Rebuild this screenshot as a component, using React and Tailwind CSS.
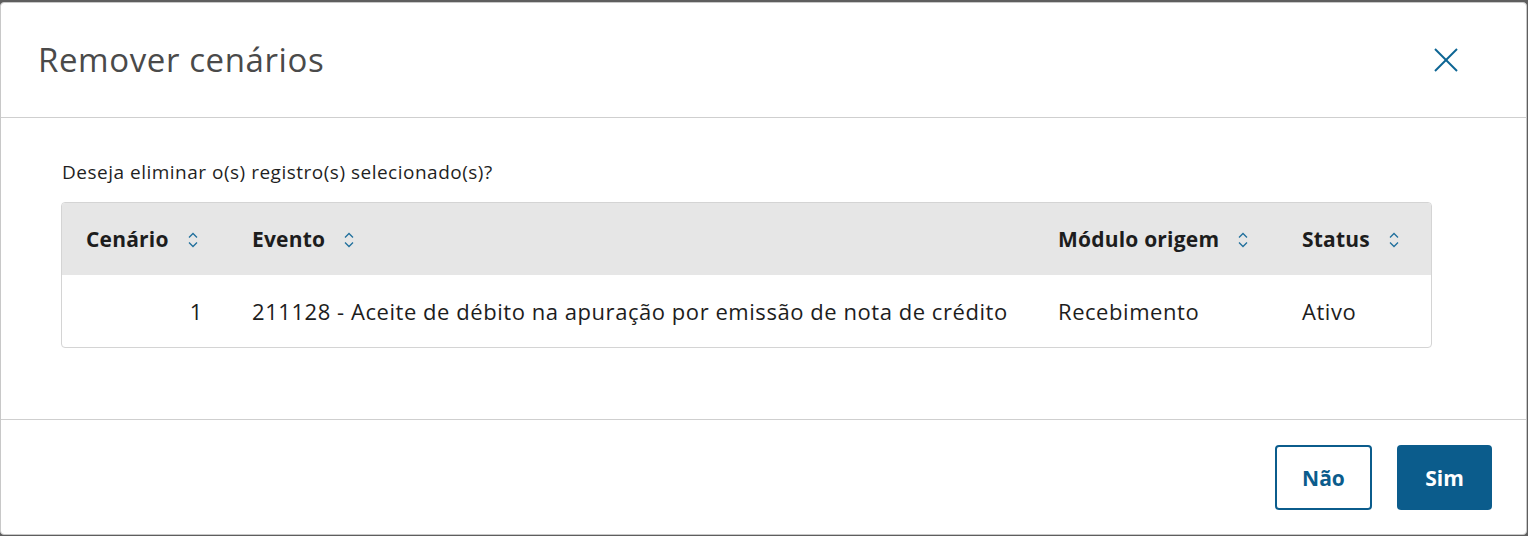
import React from 'react'

function SortIcon() {
  return (
    <svg width="10" height="18" viewBox="0 0 10 18" className="ml-[19px] shrink-0" fill="none" stroke="#1f6f9c" strokeWidth="1.3">
      <polyline points="1,6.5 5,2.5 9,6.5" />
      <polyline points="1,11.5 5,15.5 9,11.5" />
    </svg>
  )
}

const cols = [
  { label: 'Cenário' },
  { label: 'Evento' },
  { label: 'Módulo origem' },
  { label: 'Status' },
]

export default function App() {
  return (
    <div className="h-[536px] bg-[#5e5e5e] pt-[2px] pr-[1px] pb-[1px]" style={{ fontFamily: '"Open Sans", "Noto Sans", sans-serif' }}>
      <div className="h-full bg-white border border-[#c8c8c8] rounded-[4px] flex flex-col">
        <div className="h-[115px] shrink-0 flex items-center justify-between pl-[37px] pr-[68px] border-b border-[#cfcfcf]">
          <h1 className="text-[33px] tracking-[0.6px] text-[#4a4a4a] font-normal">Remover cenários</h1>
          <button className="w-[24px] h-[24px]">
            <svg width="24" height="24" viewBox="0 0 24 24" fill="none" stroke="#0c6594" strokeWidth="2">
              <line x1="1" y1="1" x2="23" y2="23" />
              <line x1="23" y1="1" x2="1" y2="23" />
            </svg>
          </button>
        </div>

        <div className="flex-1 pl-[60px] pr-[94px] pt-[42px]">
          <p className="pl-[1px] text-[19px] leading-[24px] tracking-[0.5px] text-[#1f1f1f]">Deseja eliminar o(s) registro(s) selecionado(s)?</p>
          <div className="mt-[18px] border border-[#d4d4d4] rounded-[4px] overflow-hidden">
            <div className="grid grid-cols-[166px_1fr_244px_153px] h-[72px] bg-[#e6e6e6] text-[21px] font-bold tracking-[0.2px] text-[#1d1d1d]">
              {cols.map((c) => (
                <div key={c.label} className="flex items-center pl-[24px] pt-[1px]">
                  <span>{c.label}</span>
                  <SortIcon />
                </div>
              ))}
            </div>
            <div className="grid grid-cols-[166px_1fr_244px_153px] h-[72px] text-[22px] tracking-[0.55px] text-[#1d1d1d]">
              <div className="flex items-center justify-end pr-[25px]">1</div>
              <div className="flex items-center pl-[24px]">211128 - Aceite de débito na apuração por emissão de nota de crédito</div>
              <div className="flex items-center pl-[24px]">Recebimento</div>
              <div className="flex items-center pl-[24px]">Ativo</div>
            </div>
          </div>
        </div>

        <div className="h-[115px] shrink-0 border-t border-[#cfcfcf] flex items-center justify-end gap-[25px] pr-[34px]">
          <button className="w-[97px] h-[65px] pt-[3px] rounded-[4px] border-2 border-[#0b5c8c] text-[#0b5c8c] text-[21px] font-bold">Não</button>
          <button className="w-[95px] h-[65px] pt-[3px] rounded-[4px] bg-[#0b5c8c] text-white text-[21px] font-bold">Sim</button>
        </div>
      </div>
    </div>
  )
}
